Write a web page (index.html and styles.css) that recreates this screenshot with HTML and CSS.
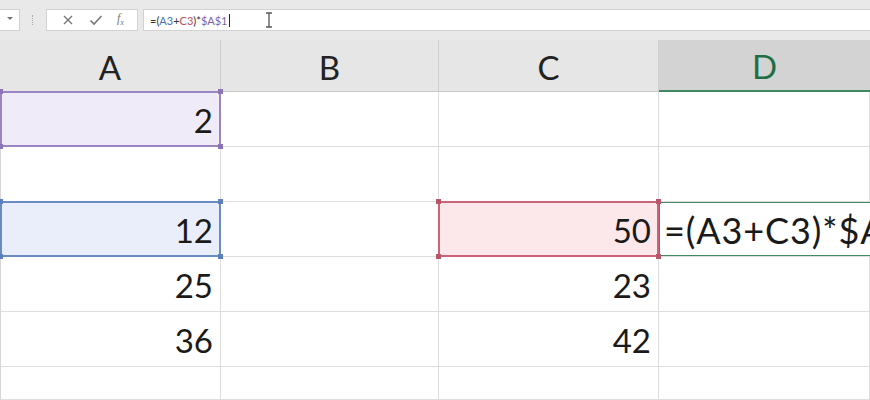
FILE: index.html
```html
<!DOCTYPE html>
<html>
<head>
<meta charset="utf-8">
<link rel="stylesheet" href="styles.css">
</head>
<body>
<div class="toolbar">
  <div class="namebox"><span class="caret-down"></span></div>
  <div class="grip"></div>
  <div class="btnbox">
    <svg class="ico" width="12" height="12" viewBox="0 0 12 12"><path d="M2 2 L10 10 M10 2 L2 10" stroke="#777" stroke-width="1.4" fill="none"/></svg>
    <svg class="ico" width="14" height="12" viewBox="0 0 14 12"><path d="M1.5 6.5 L5 10 L12.5 2" stroke="#777" stroke-width="1.6" fill="none"/></svg>
    <span class="fx"><i>f</i><sub>x</sub></span>
  </div>
  <div class="formula">
    <span class="ftext">=(<span class="r-blue">A3</span>+<span class="r-red">C3</span>)*<span class="r-purple">$A$1</span></span><span class="textcaret"></span>
    <svg class="ibeam" width="8" height="16" viewBox="0 0 8 16"><path d="M1 1 H7 M4 1 V15 M1 15 H7" stroke="#555" stroke-width="1.3" fill="none"/></svg>
  </div>
</div>
<div class="sheet">
  <div class="hd">A</div>
  <div class="hd">B</div>
  <div class="hd">C</div>
  <div class="hd hd-sel">D</div>

  <div class="c first num sel sel-purple">2<span class="h tl"></span><span class="h tr"></span><span class="h bl"></span><span class="h br"></span></div>
  <div class="c"></div>
  <div class="c"></div>
  <div class="c"></div>

  <div class="c first"></div>
  <div class="c"></div>
  <div class="c"></div>
  <div class="c"></div>

  <div class="c first num sel sel-blue">12<span class="h tl"></span><span class="h tr"></span><span class="h bl"></span><span class="h br"></span></div>
  <div class="c"></div>
  <div class="c num sel sel-red">50<span class="h tl"></span><span class="h tr"></span><span class="h bl"></span><span class="h br"></span></div>
  <div class="c edit">=(A3+C3)*$A$1</div>

  <div class="c first num">25</div>
  <div class="c"></div>
  <div class="c num">23</div>
  <div class="c"></div>

  <div class="c first num">36</div>
  <div class="c"></div>
  <div class="c num">42</div>
  <div class="c"></div>

  <div class="c first"></div>
  <div class="c"></div>
  <div class="c"></div>
  <div class="c"></div>
</div>
</body>
</html>
```
FILE: styles.css
```css
* { box-sizing: border-box; }
html, body { margin: 0; padding: 0; }
body {
  width: 870px;
  height: 400px;
  overflow: hidden;
  background: #ffffff;
  font-family: Lato, "Open Sans", sans-serif;
}
.toolbar {
  height: 40px;
  background: #e9e9e9;
  display: flex;
  align-items: flex-start;
  padding-top: 9px;
}
.namebox {
  width: 20px;
  height: 22px;
  background: #fff;
  border: 1px solid #d2d2d2;
  border-left: none;
  display: flex;
  justify-content: flex-end;
  padding: 7px 6px 0 0;
}
.caret-down {
  width: 0; height: 0;
  border-left: 3px solid transparent;
  border-right: 3px solid transparent;
  border-top: 3px solid #777;
}
.grip {
  width: 26px;
  height: 22px;
  display: flex;
  justify-content: center;
  padding-top: 6px;
}
.grip::before {
  content: "";
  width: 1px;
  height: 10px;
  border-left: 1px dotted #aaa;
}
.btnbox {
  width: 92px;
  height: 22px;
  background: #fff;
  border: 1px solid #d2d2d2;
  display: flex;
  align-items: center;
  justify-content: space-around;
  padding: 0 6px 0 8px;
}
.fx {
  font-family: "Liberation Serif", serif;
  color: #777;
  font-size: 12px;
  line-height: 1;
}
.fx sub { font-size: 8px; font-style: italic; }
.formula {
  margin-left: 5px;
  flex: 1;
  height: 22px;
  background: #fff;
  border: 1px solid #d2d2d2;
  border-right: none;
  display: flex;
  align-items: center;
  padding-left: 6px;
  font-size: 11px;
  color: #333;
}
.r-blue { color: #4a6fb5; }
.r-red { color: #c0505f; }
.r-purple { color: #7f64a8; }
.textcaret {
  width: 1px;
  height: 13px;
  background: #222;
  margin-left: 1px;
}
.ibeam { margin-left: 35px; }

.sheet {
  display: grid;
  grid-template-columns: 221px 218px 220px 1fr;
  grid-template-rows: 52px repeat(5, 55px) 33px;
}
.hd {
  background: #e6e6e6;
  border-right: 1px solid #cfcfcf;
  border-bottom: 1px solid #c8c8c8;
  display: flex;
  align-items: center;
  justify-content: center;
  font-size: 33px;
  color: #222;
  padding-top: 2px;
}
.hd-sel {
  background: #d3d3d3;
  color: #1f6f45;
  border-bottom: 2px solid #3f8a62;
  border-right: none;
}
.c {
  position: relative;
  border-right: 1px solid #dedede;
  border-bottom: 1px solid #dedede;
  font-size: 33px;
  color: #1a1a1a;
  display: flex;
  align-items: center;
  white-space: nowrap;
}
.first { border-left: 1px solid #d6d6d6; }
.num {
  justify-content: flex-end;
  padding-right: 7px;
  padding-top: 2px;
}
.sel::after {
  content: "";
  position: absolute;
  top: -1px; left: -1px; right: -1px; bottom: -1px;
  border: 2px solid currentColor;
}
.sel-purple { background: #efebf8; }
.sel-purple::after { border-color: #9a85c2; }
.sel-blue { background: #e9eefa; }
.sel-blue::after { border-color: #6a8cc6; }
.sel-red { background: #fce7ea; }
.sel-red::after { border-color: #c96577; }
.h {
  position: absolute;
  width: 5px;
  height: 5px;
  z-index: 2;
}
.sel-purple .h { background: #8c74b8; }
.sel-blue .h { background: #5b7fbf; }
.sel-red .h { background: #b9566a; }
.tl { top: -3px; left: -3px; }
.tr { top: -3px; right: -3px; }
.bl { bottom: -3px; left: -3px; }
.br { bottom: -3px; right: -3px; }
.edit {
  border-right: none;
  padding-left: 5px;
  padding-top: 2px;
  overflow: hidden;
  font-size: 36px;
  letter-spacing: 0.9px;
}
.edit::after {
  content: "";
  position: absolute;
  top: -1px; left: -1px; right: -2px; bottom: -1px;
  border: 2px solid #3f8a62;
}
```
